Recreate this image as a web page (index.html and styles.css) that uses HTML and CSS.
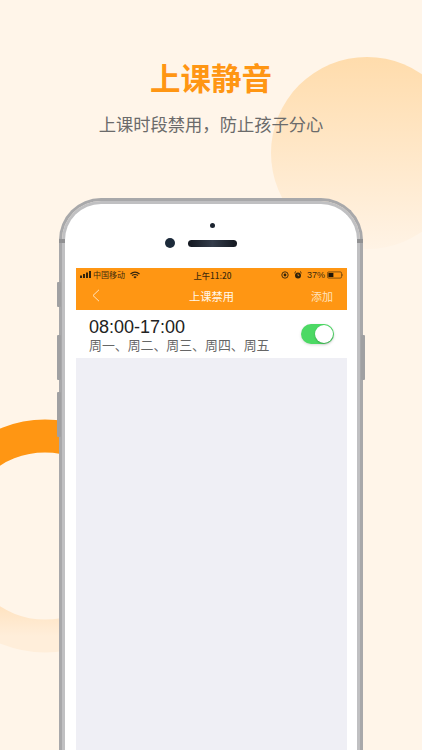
FILE: index.html
```html
<!DOCTYPE html>
<html lang="zh-CN">
<head>
  <meta charset="UTF-8">
  <title>上课静音</title>
  <link rel="stylesheet" href="styles.css">
</head>
<body>
  <div class="page">
    <div class="deco-sun"></div>
    <svg class="deco-ring" width="240" height="240" viewBox="0 0 240 240">
      <defs>
        <linearGradient id="ringFill" x1="0" y1="0" x2="0" y2="1">
          <stop offset="0.2" stop-color="#ff9613"/>
          <stop offset="0.8" stop-color="#ffdfb8"/>
          <stop offset="1" stop-color="#ffeeda"/>
        </linearGradient>
      </defs>
      <circle cx="120" cy="120" r="100" fill="none" stroke="url(#ringFill)" stroke-width="33"/>
    </svg>

    <h1 class="title">上课静音</h1>
    <p class="subtitle">上课时段禁用&#65292;防止孩子分心</p>

    <div class="phone">
      <span class="side-btn btn-mute"></span>
      <span class="side-btn btn-up"></span>
      <span class="side-btn btn-down"></span>
      <span class="side-btn btn-power"></span>
      <span class="band band-left"></span>
      <span class="band band-right"></span>
      <div class="phone-inner">
        <div class="phone-top">
          <span class="earpiece"></span>
          <div class="sensors">
            <span class="camera"></span>
            <span class="speaker"></span>
          </div>
        </div>
        <div class="screen">
          <div class="header">
            <div class="statusbar">
              <div class="status-left">
                <svg width="11" height="7" viewBox="0 0 11 7">
                  <rect x="0" y="4.5" width="2" height="2.5" fill="#33240c"/>
                  <rect x="3" y="3" width="2" height="4" fill="#33240c"/>
                  <rect x="6" y="1.5" width="2" height="5.5" fill="#33240c"/>
                  <rect x="9" y="0" width="2" height="7" fill="#33240c"/>
                </svg>
                <span>中国移动</span>
                <svg class="wifi" width="10" height="8" viewBox="0 0 10 8">
                  <path d="M0.5 3 Q5 -0.8 9.5 3 M2 4.6 Q5 2.4 8 4.6" fill="none" stroke="#33240c" stroke-width="1.2"/>
                  <path d="M3.4 5.9 Q5 4.8 6.6 5.9 L5 7.6 Z" fill="#33240c"/>
                </svg>
              </div>
              <div class="status-time">上午11:20</div>
              <div class="status-right">
                <svg width="8" height="8" viewBox="0 0 8 8">
                  <circle cx="4" cy="4" r="3.2" fill="none" stroke="#33240c" stroke-width="0.9"/>
                  <circle cx="4" cy="4" r="1.4" fill="#33240c"/>
                </svg>
                <svg class="alarm" width="8" height="8" viewBox="0 0 8 8">
                  <circle cx="4" cy="4.4" r="3" fill="#33240c"/>
                  <path d="M0.4 2 L2 0.5 M7.6 2 L6 0.5" stroke="#33240c" stroke-width="1"/>
                  <path d="M4 2.8 V4.6 H5.2" fill="none" stroke="#ff9613" stroke-width="0.7"/>
                </svg>
                <span class="battery-pct">37%</span>
                <svg width="17" height="8" viewBox="0 0 17 8">
                  <rect x="0.4" y="0.9" width="14.2" height="6.2" rx="1.4" fill="none" stroke="#33240c" stroke-width="0.6"/>
                  <rect x="1.4" y="1.9" width="5" height="4.2" fill="#1f1608"/>
                  <path d="M15.4 2.9 Q16.6 4 15.4 5.1 Z" fill="#33240c"/>
                </svg>
              </div>
            </div>
            <div class="navbar">
              <svg class="back" width="8" height="13" viewBox="0 0 8 13">
                <path d="M7 0.8 L1 6.5 L7 12.2" fill="none" stroke="#ffe3bd" stroke-width="1"/>
              </svg>
              <span class="nav-title">上课禁用</span>
              <span class="nav-action">添加</span>
            </div>
          </div>
          <div class="rule-row">
            <div class="rule-text">
              <div class="rule-time">08:00-17:00</div>
              <div class="rule-days">周一、周二、周三、周四、周五</div>
            </div>
            <div class="toggle"><span class="knob"></span></div>
          </div>
        </div>
      </div>
    </div>
  </div>
</body>
</html>
```

FILE: styles.css
```css
* {
  box-sizing: border-box;
}
body {
  margin: 0;
  font-family: "Noto Sans CJK SC", "Liberation Sans", sans-serif;
}
.page {
  position: relative;
  width: 422px;
  height: 750px;
  overflow: hidden;
  background: #fff5e9;
  padding-top: 55px;
}
.deco-sun {
  position: absolute;
  left: 271px;
  top: 57px;
  width: 192px;
  height: 192px;
  border-radius: 50%;
  background: linear-gradient(180deg, #ffdcac 0%, #fff3e5 100%);
}
.deco-ring {
  position: absolute;
  left: -75px;
  top: 416px;
}
.title {
  position: relative;
  margin: 0;
  height: 44px;
  line-height: 44px;
  text-align: center;
  font-size: 30.5px;
  font-weight: 700;
  color: #ff9613;
}
.subtitle {
  position: relative;
  margin: 13px 0 0;
  height: 24px;
  line-height: 24px;
  text-align: center;
  font-size: 17.3px;
  color: #6b6b6b;
}
.phone {
  position: relative;
  width: 304px;
  height: 600px;
  margin: 62px 0 0 59px;
  border: 3px solid #a8a8aa;
  border-bottom: none;
  border-radius: 42px 42px 0 0;
}
.phone-inner {
  height: 100%;
  background: #fff;
  border: 3px solid #c0c0c2;
  border-bottom: none;
  border-radius: 39px 39px 0 0;
}
.side-btn {
  position: absolute;
  width: 4px;
  background: #a0a0a2;
  border-radius: 1px;
}
.btn-mute { left: -5px; top: 81px; height: 25px; }
.btn-up { left: -5px; top: 134px; height: 45px; }
.btn-down { left: -5px; top: 191px; height: 45px; }
.btn-power { right: -5px; top: 134px; height: 45px; }
.band {
  position: absolute;
  top: 38px;
  width: 6px;
  height: 4px;
  background: #919193;
}
.band-left { left: -3px; }
.band-right { right: -3px; }
.phone-top {
  height: 64px;
  display: flex;
  flex-direction: column;
  align-items: center;
  padding-top: 19px;
}
.earpiece {
  width: 5px;
  height: 5px;
  margin-left: 2px;
  border-radius: 50%;
  background: #1c2430;
}
.sensors {
  display: flex;
  align-items: center;
  gap: 13px;
  margin-top: 10px;
  margin-left: -20px;
}
.camera {
  width: 10px;
  height: 10px;
  border-radius: 50%;
  background: #1c2a3a;
}
.speaker {
  width: 49px;
  height: 7px;
  border-radius: 4px;
  background: linear-gradient(90deg, #141820, #333c4a 50%, #141820);
}
.screen {
  height: 530px;
  margin: 0 10px 0 11px;
  background: #efeff5;
}
.header {
  height: 42px;
  background: #ff9613;
}
.statusbar {
  position: relative;
  height: 13px;
  padding: 0 3px 0 4px;
  display: flex;
  align-items: center;
  justify-content: space-between;
  font-size: 8px;
  color: #3f2c0c;
}
.status-left,
.status-right {
  display: flex;
  align-items: center;
  gap: 2px;
}
.wifi {
  margin-left: 3px;
}
.alarm {
  margin-left: 3px;
}
.battery-pct {
  margin-left: 3px;
  font-family: "Liberation Sans", sans-serif;
  font-size: 9px;
}
.status-time {
  position: absolute;
  left: 2px;
  right: 0;
  text-align: center;
  font-size: 8.3px;
  font-weight: 500;
  pointer-events: none;
}
.navbar {
  position: relative;
  height: 29px;
  display: flex;
  align-items: center;
  justify-content: flex-end;
  padding-right: 14px;
  font-size: 11px;
  color: #fff;
}
.back {
  position: absolute;
  left: 16px;
  top: 8px;
}
.nav-title {
  position: absolute;
  left: 0;
  right: 0;
  text-align: center;
  font-size: 11.3px;
  color: #fff8ec;
}
.nav-action {
  color: #ffe3bd;
}
.rule-row {
  height: 48px;
  padding: 8px 13px 0;
  display: flex;
  justify-content: space-between;
  background: #fff;
}
.rule-time {
  height: 19px;
  line-height: 19px;
  font-family: "Liberation Sans", sans-serif;
  font-size: 18px;
  color: #222;
}
.rule-days {
  height: 16px;
  line-height: 16px;
  font-size: 12.9px;
  color: #666;
}
.toggle {
  position: relative;
  width: 33px;
  height: 20px;
  margin-top: 6px;
  border-radius: 10px;
  background: #4cd964;
  box-shadow: 0 1px 3px rgba(0, 0, 0, 0.15);
}
.knob {
  position: absolute;
  right: 1px;
  top: 1px;
  width: 18px;
  height: 18px;
  border-radius: 50%;
  background: #fff;
  box-shadow: 0 1px 2px rgba(0, 0, 0, 0.25);
}
```
